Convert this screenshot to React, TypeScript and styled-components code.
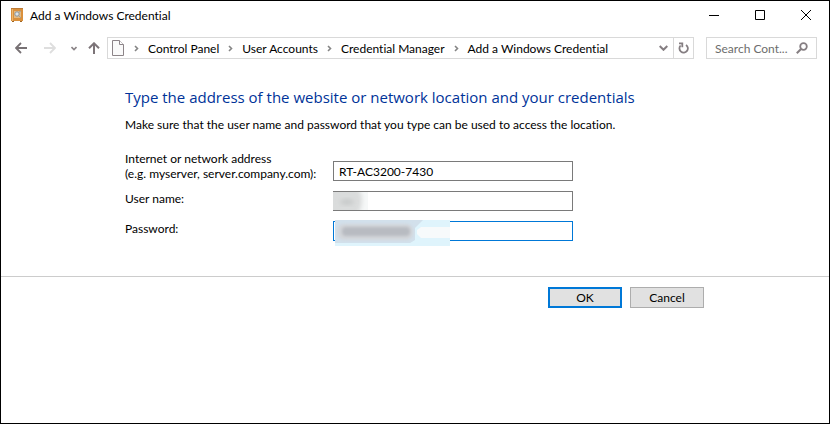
import React from "react";
import styled, { createGlobalStyle } from "styled-components";

const GlobalStyle = createGlobalStyle`
  *, *::before, *::after { box-sizing: border-box; }
  body {
    margin: 0;
    background: #fff;
    color: #000;
    font: 12px/15px Lato, "Open Sans", sans-serif;
    font-variant-ligatures: none;
  }
  button, input { font: inherit; color: inherit; margin: 0; }
  svg { display: block; }
`;

const Window = styled.div`
  display: flex;
  flex-direction: column;
  min-height: 100vh;
  border: 1px solid #000;
  background: #fff;
`;

const TitleBar = styled.header`
  display: flex;
  align-items: center;
  height: 28px;
  padding-left: 10px;
`;

const Title = styled.span`
  flex: 1;
  margin-left: 6px;
`;

const CaptionButton = styled.button`
  display: flex;
  align-items: center;
  justify-content: center;
  width: 46px;
  height: 28px;
  padding: 0;
  border: 0;
  background: transparent;
`;

const NavBar = styled.nav`
  display: flex;
  align-items: center;
  margin-top: 8px;
  padding: 0 12px 0 11px;
`;

const IconButton = styled.button<{ $width: number }>`
  display: flex;
  flex-shrink: 0;
  align-items: center;
  justify-content: center;
  width: ${({ $width }) => $width}px;
  height: 20px;
  padding: 0;
  border: 0;
  background: transparent;
`;

const NavButtons = styled.div`
  display: flex;
  align-items: center;
  width: 95px;
  & > :last-child { margin-left: auto; }
`;

const AddressBar = styled.div`
  display: flex;
  flex: 1;
  align-items: center;
  height: 22px;
  padding-left: 4px;
  border: 1px solid #d9d9d9;
`;

const Crumbs = styled.ol`
  display: flex;
  flex: 1;
  margin: 0;
  padding: 0;
  list-style: none;
`;

const Crumb = styled.li`
  display: flex;
  align-items: center;
  white-space: nowrap;
`;

const CrumbLink = styled.a`
  color: inherit;
  text-decoration: none;
`;

const Separator = styled.span`
  display: flex;
  justify-content: center;
  width: 23px;
`;

const RefreshCell = styled.div`
  border-left: 1px solid #d9d9d9;
`;

const SearchBox = styled.label`
  display: flex;
  align-items: center;
  width: 111px;
  height: 22px;
  margin-left: 12px;
  padding: 0 8px;
  border: 1px solid #d9d9d9;
`;

const SearchInput = styled.input`
  flex: 1;
  min-width: 0;
  height: 20px;
  padding: 0;
  border: 0;
  outline: 0;
  background: transparent;
  &::placeholder { color: #6d6d6d; opacity: 1; }
`;

const Content = styled.main`
  padding: 28px 124px 35px;
`;

const Heading = styled.h1`
  margin: 0;
  color: #003399;
  font-family: "Open Sans", sans-serif;
  font-size: 15px;
  line-height: 20px;
  font-weight: 400;
  white-space: nowrap;
`;

const Intro = styled.p`
  margin: 10px 0 19px;
  white-space: nowrap;
`;

const Fields = styled.form`
  display: grid;
  grid-template-columns: 208px 240px;
  row-gap: 10px;
`;

const Label = styled.label`
  white-space: nowrap;
`;

const Field = styled.div`
  position: relative;
  align-self: end;
  height: 20px;
`;

const TextInput = styled.input<{ $active?: boolean }>`
  display: block;
  width: 100%;
  height: 20px;
  padding: 0 5px;
  border: 1px solid ${({ $active }) => ($active ? "#0078d7" : "#7a7a7a")};
  border-radius: 0;
  outline: 0;
  background: #fff;
`;

const Smudge = styled.svg<{ $left: number; $top: number }>`
  position: absolute;
  left: ${({ $left }) => $left}px;
  top: ${({ $top }) => $top}px;
  pointer-events: none;
`;

const Footer = styled.footer`
  display: flex;
  justify-content: flex-end;
  gap: 8px;
  padding: 10px 125px;
  border-top: 1px solid #ccc;
`;

const DialogButton = styled.button<{ $primary?: boolean }>`
  width: 74px;
  height: 21px;
  padding: 0;
  border: ${({ $primary }) => ($primary ? "2px solid #0078d7" : "1px solid #adadad")};
  background: #e1e1e1;
  line-height: 15px;
`;

const SafeIcon = () => (
  <svg width="13" height="15" viewBox="0 0 13 15" aria-hidden="true">
    <path d="M0 1h12v12H0z" fill="#d9903c" />
    <path d="M0 0h12v1H0z" fill="#bd7a35" />
    <path d="M1 13h2v1H1zM9 13h2v1H9z" fill="#9d6425" />
    <path d="M1 1h1v12H1z" fill="#edb76d" />
    <path d="M3 3h7v7H3z" fill="#e3b981" />
    <circle cx="6" cy="6" r="2.2" fill="#dfe3e4" stroke="#87939a" />
    <path d="M7 7l3 3M8 4l2-1" stroke="#9aa0a0" />
  </svg>
);

const ArrowIcon = ({ color, forward }: { color: string; forward?: boolean }) => (
  <svg width="12" height="12" viewBox="0 0 12 12" fill="none" stroke={color} strokeWidth={1.8} aria-hidden="true">
    {forward ? <path d="M0 6h11M6 1l5 5-5 5" /> : <path d="M12 6H1M6 1L1 6l5 5" />}
  </svg>
);

const UpIcon = () => (
  <svg width="12" height="12" viewBox="0 0 12 12" fill="none" stroke="#7c7478" strokeWidth="2" aria-hidden="true">
    <path d="M6 12V1.5M1 6.3l5-5 5 5" />
  </svg>
);

const SmallChevronDown = () => (
  <svg width="6" height="5" viewBox="0 0 6 5" fill="none" stroke="#8a8487" strokeWidth="1.6" aria-hidden="true">
    <path d="M.5 1L3 3.5 5.5 1" />
  </svg>
);

const ChevronDown = () => (
  <svg width="9" height="6" viewBox="0 0 9 6" fill="none" stroke="#857e82" strokeWidth="2" aria-hidden="true">
    <path d="M.7 1l3.8 3.8L8.3 1" />
  </svg>
);

const ChevronRight = () => (
  <svg width="5" height="7" viewBox="0 0 5 7" fill="none" stroke="#858585" strokeWidth="1.6" aria-hidden="true">
    <path d="M1 1l2.5 2.5L1 6" />
  </svg>
);

const PageIcon = () => (
  <svg width="13" height="16" viewBox="0 0 13 16" aria-hidden="true">
    <path d="M.5.5h7l4 4v11H.5z" fill="#fafafa" stroke="#8c8488" />
    <path d="M7.5.5v4h4" fill="#fff" stroke="#8c8488" />
  </svg>
);

const RefreshIcon = () => (
  <svg width="11" height="12" viewBox="0 0 11 12" fill="none" stroke="#857e82" strokeWidth="1.8" aria-hidden="true">
    <path d="M8 2.9A4.2 4.2 0 1 1 2.6 3.5" />
    <path d="M1 1.4h3.3v3.8" />
  </svg>
);

const SearchIcon = () => (
  <svg width="12" height="12" viewBox="0 0 12 12" fill="none" stroke="#857e82" aria-hidden="true">
    <circle cx="7.5" cy="4.5" r="3.3" strokeWidth="1.8" />
    <path d="M5 7L.8 11.2" strokeWidth="2" />
  </svg>
);

const crumbs = ["Control Panel", "User Accounts", "Credential Manager", "Add a Windows Credential"];

export default function App() {
  return (
    <>
      <GlobalStyle />
      <Window>
        <TitleBar>
          <SafeIcon />
          <Title>Add a Windows Credential</Title>
          <CaptionButton aria-label="Minimize">
            <svg width="10" height="10" viewBox="0 0 10 10"><path d="M0 5.5h10" stroke="#000" /></svg>
          </CaptionButton>
          <CaptionButton aria-label="Maximize">
            <svg width="10" height="10" viewBox="0 0 10 10"><path d="M.5.5h9v9h-9z" fill="none" stroke="#000" /></svg>
          </CaptionButton>
          <CaptionButton aria-label="Close">
            <svg width="10" height="10" viewBox="0 0 10 10"><path d="M0 0l10 10M10 0L0 10" stroke="#000" /></svg>
          </CaptionButton>
        </TitleBar>
        <NavBar aria-label="Location">
          <NavButtons>
            <IconButton $width={17} aria-label="Back"><ArrowIcon color="#777174" /></IconButton>
            <IconButton $width={42} aria-label="Forward"><ArrowIcon color="#dedede" forward /></IconButton>
            <IconButton $width={6} aria-label="Recent locations"><SmallChevronDown /></IconButton>
            <IconButton $width={26} aria-label="Up"><UpIcon /></IconButton>
          </NavButtons>
          <AddressBar>
            <PageIcon />
            <Crumbs>
              {crumbs.map((name) => (
                <Crumb key={name}>
                  <Separator><ChevronRight /></Separator>
                  <CrumbLink href="#">{name}</CrumbLink>
                </Crumb>
              ))}
            </Crumbs>
            <IconButton $width={20} aria-label="Previous locations"><ChevronDown /></IconButton>
            <RefreshCell>
              <IconButton $width={19} aria-label="Refresh"><RefreshIcon /></IconButton>
            </RefreshCell>
          </AddressBar>
          <SearchBox>
            <SearchInput type="text" aria-label="Search Control Panel" placeholder="Search Cont..." />
            <SearchIcon />
          </SearchBox>
        </NavBar>
        <Content>
          <Heading>Type the address of the website or network location and your credentials</Heading>
          <Intro>Make sure that the user name and password that you type can be used to access the location.</Intro>
          <Fields id="credential">
            <Label htmlFor="address">
              Internet or network address
              <br />
              (e.g. myserver, server.company.com):
            </Label>
            <Field>
              <TextInput id="address" type="text" defaultValue="RT-AC3200-7430" />
            </Field>
            <Label htmlFor="user">User name:</Label>
            <Field>
              <TextInput id="user" type="text" />
              <Smudge $left={0} $top={1} width="35" height="18" viewBox="0 0 35 18" aria-hidden="true">
                <defs>
                  <filter id="soft" x="-30%" y="-30%" width="160%" height="160%"><feGaussianBlur stdDeviation="2" /></filter>
                </defs>
                <path d="M0 0h35v18H0z" fill="#f6f8f8" />
                <path d="M-6-6h26q9 3 9 14t-7 16H-6z" fill="#dadcdc" filter="url(#soft)" />
                <ellipse cx="14" cy="10" rx="7" ry="3" fill="#c8caca" filter="url(#soft)" />
              </Smudge>
            </Field>
            <Label htmlFor="password">Password:</Label>
            <Field>
              <TextInput id="password" type="password" $active />
              <Smudge $left={2} $top={-1} width="115" height="26" viewBox="0 0 115 26" aria-hidden="true">
                <defs>
                  <filter id="bar" x="-20%" y="-60%" width="140%" height="220%"><feGaussianBlur stdDeviation="1.5" /></filter>
                </defs>
                <path d="M0 0h115v26H0z" fill="#dff4fc" />
                <path d="M0 0h88l-8 8v12l-5 3H0z" fill="#d2e0eb" />
                <rect x="2" y="4" width="76" height="16" rx="7" fill="#d3d6da" filter="url(#bar)" />
                <rect x="7" y="7" width="68" height="9" rx="4" fill="#b8bbc1" filter="url(#bar)" />
                <path d="M115 7H86l-4 3v4l4 4h29z" fill="#f7fafb" />
              </Smudge>
            </Field>
          </Fields>
        </Content>
        <Footer>
          <DialogButton $primary type="submit" form="credential">OK</DialogButton>
          <DialogButton type="button">Cancel</DialogButton>
        </Footer>
      </Window>
    </>
  );
}
